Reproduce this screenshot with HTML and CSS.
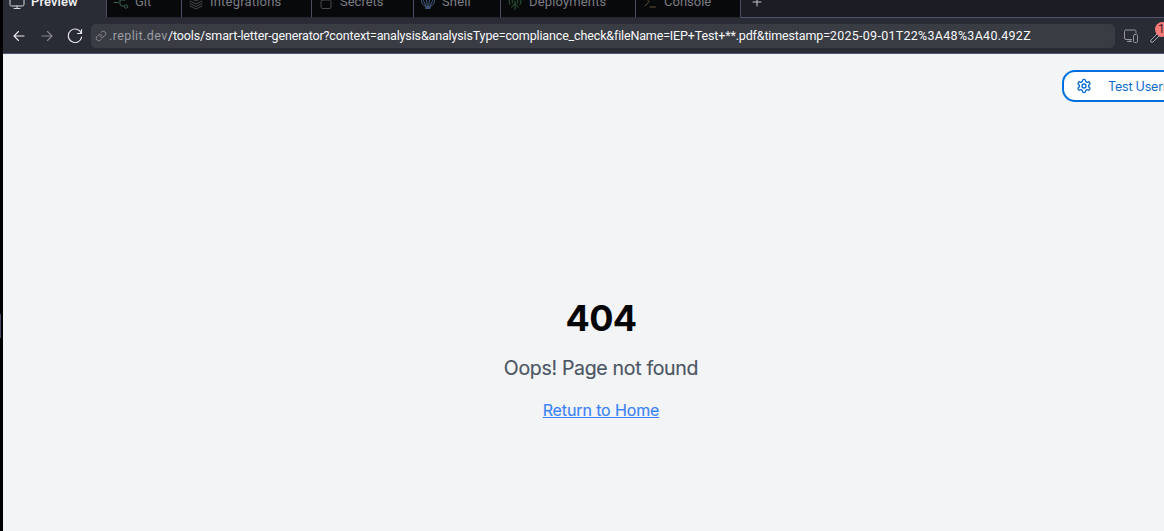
FILE: index.html
```html
<!DOCTYPE html>
<html lang="en">
<head>
<meta charset="utf-8">
<title>Preview</title>
<link rel="stylesheet" href="styles.css">
</head>
<body>
<div class="gutter"><div class="handle"></div></div>
<div class="pane">
  <nav class="tabs">
    <div class="tab tab-preview"><svg class="ico" viewBox="0 0 16 16"><path d="M2 2.500h12a1 1 0 0 1 1 1v7a1.500 1.500 0 0 1-1.500 1.500h-11a1.500 1.500 0 0 1-1.500-1.500v-7a1 1 0 0 1 1-1zM8 12v2.500M5 14.500h6"/></svg><span class="lbl l-preview">Preview</span></div>
    <div class="tab tab-git"><svg class="ico green" viewBox="0 0 16 16"><path d="M1 8.500h4.500M7 2v8a2 2 0 0 0 2 2h2.500M7 6h5"/><circle cx="13" cy="12.500" r="1.700"/></svg><span class="lbl">Git</span></div>
    <div class="tab tab-int"><svg class="ico" viewBox="0 0 16 16"><path d="M8 1l6 3-6 3-6-3zM2 7l6 3 6-3M2 9.500l6 3 6-3M2 12l6 3 6-3"/></svg><span class="lbl l-int">Integrations</span></div>
    <div class="tab tab-sec"><svg class="ico" viewBox="0 0 16 16"><path d="M5 6V4a3 3 0 0 1 6 0v2"/><rect x="3" y="6" width="10" height="8.500" rx="1.500"/></svg><span class="lbl">Secrets</span></div>
    <div class="tab tab-shell"><svg class="ico blue" viewBox="0 0 16 16"><path d="M6 14.500h4l.5-2 3-2.500c3-5-1-8-5.500-8s-8.500 3-5.500 8l3 2.500zM7 14L2.500 5M7.600 14L6 3M8.400 14L10 3M9 14l4.500-9"/></svg><span class="lbl l-shell">Shell</span></div>
    <div class="tab tab-dep"><svg class="ico deep" viewBox="0 0 16 16"><path d="M3 10.500a6 6 0 1 1 10 0M5.500 9a3 3 0 1 1 5 0M8 7v8.500M8 10l-3.500 3M8 10l3.500 3"/></svg><span class="lbl l-dep">Deployments</span></div>
    <div class="tab tab-con"><svg class="ico gold" viewBox="0 0 16 16"><path d="M3 3l4 4.500-4 4.500M8 13h5.500"/></svg><span class="lbl">Console</span></div>
    <div class="more"><svg class="plus" viewBox="0 0 10 10"><path d="M5 1v8M1 5h8"/></svg></div>
  </nav>
  <div class="toolbar">
    <svg class="nav" viewBox="0 0 16 16"><path d="M13 8H3.500M7.500 3.500L3 8l4.500 4.500"/></svg>
    <svg class="nav fwd" viewBox="0 0 16 16"><path d="M3 8h9.500M8.500 3.500L13 8l-4.500 4.500"/></svg>
    <svg class="nav reload" viewBox="0 0 16 16"><path d="M14.500 1.500v4h-4M14.300 5.500A6.700 6.700 0 1 0 14.600 9"/></svg>
    <div class="address">
      <svg class="link" viewBox="0 0 24 24"><path d="M10 13a5 5 0 0 0 7.500.5l3-3a5 5 0 0 0-7-7L12 5M14 11a5 5 0 0 0-7.500-.5l-3 3a5 5 0 0 0 7 7L12 19"/></svg>
      <span class="host">.replit.dev</span><span class="path">/tools/smart-letter-generator?context=analysis&amp;analysisType=compliance_check&amp;fileName=IEP+Test+**.pdf&amp;timestamp=</span><span class="path stamp">2025-09-01T22%3A48%3A40.492Z</span>
    </div>
    <svg class="devices" viewBox="0 0 16 16"><path d="M8.500 11.500H3A1.500 1.500 0 0 1 1.500 10V3.500A1.500 1.500 0 0 1 3 2h8.500A1.500 1.500 0 0 1 13 3.500V5M4.500 13.500h4M7 11.500v2"/><rect x="10.500" y="6.500" width="4" height="8" rx="1"/></svg>
    <div class="tools"><svg class="wrench" viewBox="0 0 16 16"><path d="M8 6L2 12a1.300 1.300 0 0 0 2 2l6-6 3 .5 2-3M8 6V3l3-2"/></svg><span class="badge">1</span></div>
  </div>
  <main class="page">
    <button class="users"><svg class="gear" viewBox="0 0 24 24"><path d="M12.220 2h-.440a2 2 0 0 0-2 2v.180a2 2 0 0 1-1 1.730l-.430.250a2 2 0 0 1-2 0l-.150-.080a2 2 0 0 0-2.730.730l-.220.380a2 2 0 0 0 .730 2.730l.150.100a2 2 0 0 1 1 1.720v.510a2 2 0 0 1-1 1.740l-.150.090a2 2 0 0 0-.730 2.730l.220.380a2 2 0 0 0 2.730.730l.150-.080a2 2 0 0 1 2 0l.430.250a2 2 0 0 1 1 1.730V20a2 2 0 0 0 2 2h.440a2 2 0 0 0 2-2v-.180a2 2 0 0 1 1-1.730l.430-.250a2 2 0 0 1 2 0l.150.080a2 2 0 0 0 2.730-.730l.220-.390a2 2 0 0 0-.730-2.730l-.150-.080a2 2 0 0 1-1-1.740v-.500a2 2 0 0 1 1-1.740l.150-.090a2 2 0 0 0 .730-2.730l-.220-.380a2 2 0 0 0-2.730-.730l-.150.080a2 2 0 0 1-2 0l-.430-.250a2 2 0 0 1-1-1.730V4a2 2 0 0 0-2-2z"/><circle cx="12" cy="12" r="3"/></svg><span>Test Users</span></button>
    <div class="message">
      <h1>404</h1>
      <p>Oops! Page not found</p>
      <a href="#">Return to Home</a>
    </div>
  </main>
</div>
</body>
</html>
```
FILE: styles.css
```css
* { box-sizing: border-box; }
body { margin: 0; width: 1164px; height: 531px; display: flex; overflow: hidden; background: #000; font-family: Roboto, "Liberation Sans", sans-serif; }
svg { fill: none; stroke: currentColor; flex: none; stroke-linecap: round; stroke-linejoin: round; }
.gutter { width: 3px; flex: none; padding-top: 314px; }
.handle { width: 1px; height: 24px; background: #474966; }
.pane { width: 1161px; flex: none; display: flex; flex-direction: column; }

.tabs { height: 18px; flex: none; display: flex; align-items: flex-end; overflow: hidden; background: #1c1d24; color: #7b7d83; }
.tab { height: 32px; flex: none; display: flex; align-items: center; gap: 6px; padding-left: 6px; border-right: 1px solid #4a4c61; border-bottom: 1px solid #25262e; background: #08090b; font-size: 13px; }
.ico { width: 16px; height: 16px; color: #4a4b50; stroke-width: 1; }
.lbl { line-height: 16px; white-space: nowrap; }
.green { color: #386049; }
.blue { color: #42587a; }
.deep { color: #2c5c38; }
.gold { color: #5e5237; }
.tab-preview { width: 104px; background: #2a2c35; border-bottom-color: #2a2c35; color: #f4f5f7; font-weight: 500; }
.tab-preview .ico { color: #d8dae0; }
.tab-git { width: 75px; }
.tab-int { width: 130px; }
.tab-sec { width: 102px; }
.tab-shell { width: 87px; }
.tab-dep { width: 135px; }
.tab-con { width: 105px; }
.l-preview { letter-spacing: .1px; }
.l-int { letter-spacing: .2px; }
.l-shell { letter-spacing: .15px; }
.l-dep { letter-spacing: .15px; }
.more { flex: 1; height: 32px; display: flex; align-items: center; padding-left: 11px; border-bottom: 1px solid #535570; color: #c3c5ca; }
.plus { width: 10px; height: 10px; }

.toolbar { height: 36px; flex: none; display: flex; align-items: center; padding-left: 8px; background: #2a2c35; border-bottom: 1px solid #535570; }
.nav { width: 16px; height: 16px; margin-right: 12px; color: #e8eaed; stroke-width: 1.1; }
.fwd { color: #85878d; }
.reload { margin-right: 8px; }
.address { width: 1024px; height: 24px; flex: none; display: flex; align-items: center; padding-left: 4px; border-radius: 5px; background: #3a3c44; font-size: 12.500px; white-space: nowrap; }
.link { width: 12px; height: 12px; margin-right: 2px; color: #888a90; stroke-width: 2; }
.host { width: 59px; color: #9b9da3; letter-spacing: .4px; }
.path { color: #f7f8fa; letter-spacing: -.145px; }
.stamp { letter-spacing: .28px; }
.devices { width: 16px; height: 16px; margin-left: 8px; color: #96989e; }
.tools { width: 20px; height: 24px; margin-left: 10px; flex: none; position: relative; }
.wrench { width: 16px; height: 16px; margin-top: 4px; color: #a4a6ab; }
.badge { position: absolute; left: 6px; top: -2px; width: 15px; height: 15px; border-radius: 50%; background: #f87b7b; color: #431b20; font-size: 12px; line-height: 15px; padding-left: 3px; }

.page { flex: 1; display: flex; flex-direction: column; padding-top: 16px; background: #f3f4f6; font-family: Inter, sans-serif; }
.users { width: 126px; height: 32px; flex: none; margin-left: 1059px; display: flex; align-items: center; gap: 16px; padding: 0 0 0 12px; border: 2px solid #0070e0; border-radius: 13px; background: #fff; color: #0c6bd0; font: 400 12.500px Inter, sans-serif; letter-spacing: -.2px; white-space: nowrap; }
.gear { width: 16px; height: 16px; stroke-width: 2; }
.message { display: flex; flex-direction: column; align-items: center; padding-top: 196px; margin-left: 35px; width: 1126px; }
h1 { margin: 0 0 16px; font-size: 36px; line-height: 40px; font-weight: 700; letter-spacing: -.6px; color: #050507; }
p { margin: 0 0 16px; font-size: 19.500px; line-height: 28px; letter-spacing: -.31px; -webkit-text-stroke: .15px #4b5563; color: #4b5563; }
a { font-size: 16px; line-height: 24px; letter-spacing: -.12px; color: #3b82f6; -webkit-text-stroke: .15px #3b82f6; text-decoration: underline; }
```
